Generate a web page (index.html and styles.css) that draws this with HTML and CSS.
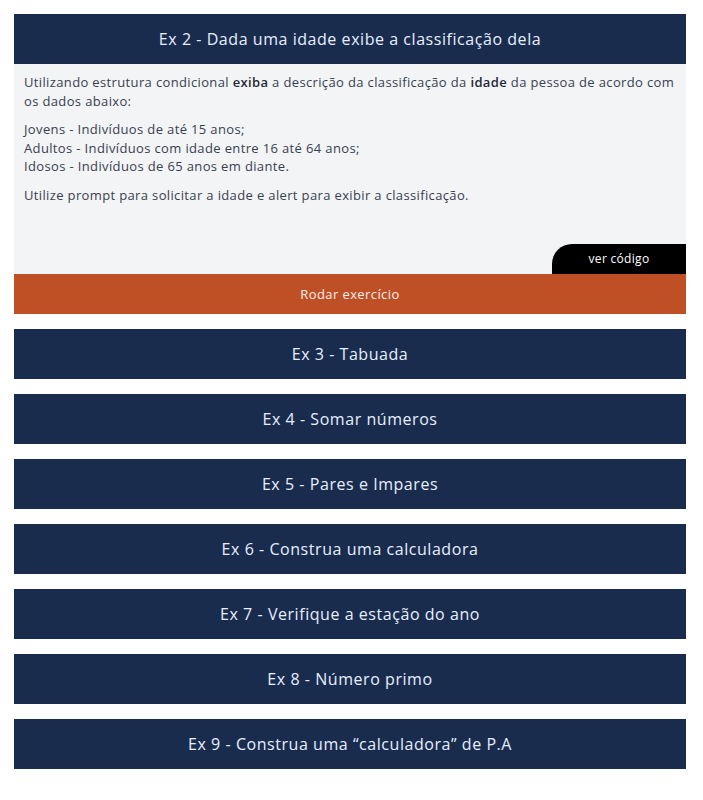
FILE: index.html
```html
<!DOCTYPE html>
<html lang="pt-BR">
<head>
<meta charset="utf-8">
<title>Exercícios</title>
<link rel="stylesheet" href="styles.css">
</head>
<body>
<main class="list">
  <section class="exercise open">
    <h2 class="ex-title">Ex 2 - Dada uma idade exibe a classificação dela</h2>
    <div class="ex-body">
      <p>Utilizando estrutura condicional <b>exiba</b> a descrição da classificação da <b>idade</b> da pessoa de acordo com os dados abaixo:</p>
      <p>Jovens - Indivíduos de até 15 anos;<br>Adultos - Indivíduos com idade entre 16 até 64 anos;<br>Idosos - Indivíduos de 65 anos em diante.</p>
      <p>Utilize prompt para solicitar a idade e alert para exibir a classificação.</p>
      <div class="code-row"><button class="code-tab">ver código</button></div>
    </div>
    <button class="run">Rodar exercício</button>
  </section>
  <section class="exercise"><h2 class="ex-title">Ex 3 - Tabuada</h2></section>
  <section class="exercise"><h2 class="ex-title">Ex 4 - Somar números</h2></section>
  <section class="exercise"><h2 class="ex-title">Ex 5 - Pares e Impares</h2></section>
  <section class="exercise"><h2 class="ex-title">Ex 6 - Construa uma calculadora</h2></section>
  <section class="exercise"><h2 class="ex-title">Ex 7 - Verifique a estação do ano</h2></section>
  <section class="exercise"><h2 class="ex-title">Ex 8 - Número primo</h2></section>
  <section class="exercise"><h2 class="ex-title">Ex 9 - Construa uma “calculadora” de P.A</h2></section>
</main>
</body>
</html>
```
FILE: styles.css
```css
* { box-sizing: border-box; }
body {
  margin: 0;
  background: #ffffff;
  font-family: "Open Sans", "Noto Sans", sans-serif;
}
.list {
  width: 672px;
  margin: 14px 0 0 14px;
  display: flex;
  flex-direction: column;
  gap: 15px;
}
.exercise { display: flex; flex-direction: column; }
.ex-title {
  margin: 0;
  height: 50px;
  display: flex;
  align-items: center;
  justify-content: center;
  background: #1a2c4d;
  color: #e6efff;
  font-size: 16px;
  font-weight: 400;
  letter-spacing: 0.55px;
}
.ex-body {
  background: #f3f4f6;
  padding: 9px 0 0 10px;
  color: #374151;
  font-size: 13px;
  line-height: 18.5px;
  letter-spacing: 0.36px;
  display: flex;
  flex-direction: column;
}
.ex-body p { margin: 0 0 10px 0; }
.ex-body b { font-weight: 600; color: #1f2937; }
.code-row {
  display: flex;
  justify-content: flex-end;
  margin-top: 30px;
}
.code-tab {
  width: 134px;
  height: 30px;
  border: 0;
  background: #000;
  color: #fff;
  font-family: inherit;
  font-size: 12px;
  letter-spacing: 0.3px;
  border-radius: 20px 0 0 0;
  padding: 0 0 1px;
}
.run {
  height: 40px;
  border: 0;
  background: #bf5025;
  color: #f5eeee;
  font-family: inherit;
  font-size: 13px;
  letter-spacing: 0.4px;
  padding: 0;
}
```
